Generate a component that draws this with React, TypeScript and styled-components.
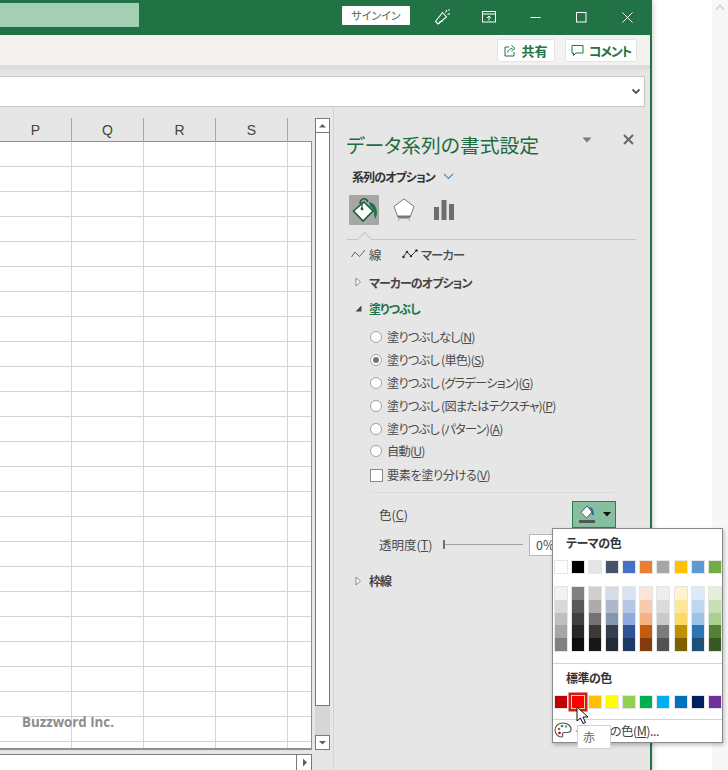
import React from 'react';
import styled, { createGlobalStyle } from 'styled-components';

const JP = `'Noto Sans CJK JP', 'Noto Sans', sans-serif`;
const GREEN = '#217346';

const GlobalStyle = createGlobalStyle`
  html, body {
    margin: 0;
    padding: 0;
    background: #fff;
    font-family: ${JP};
    font-feature-settings: 'palt';
  }
  * { box-sizing: border-box; }
`;

const Page = styled.div`
  display: flex;
  width: 728px;
  height: 770px;
  overflow: hidden;
  background: #fff;
`;

const Window = styled.div`
  position: relative;
  display: flex;
  flex-direction: column;
  width: 652px;
  height: 770px;
  flex: none;
  background: #e6e6e6;
  border-right: 2px solid ${GREEN};
  box-shadow: 2px 0 4px rgba(0, 0, 0, 0.15);
`;

const BlankGap = styled.div`
  flex: 1;
`;

const PageScroll = styled.div`
  display: flex;
  justify-content: center;
  width: 16px;
  padding-top: 4px;
  background: #f7f7f7;
`;

/* title bar */
const TitleBar = styled.div`
  display: flex;
  align-items: center;
  height: 35px;
  flex: none;
  background: ${GREEN};
`;

const SearchBox = styled.div`
  width: 139px;
  height: 24px;
  margin-right: 203px;
  margin-top: -5px;
  background: #a3d0b5;
`;

const SignIn = styled.div`
  width: 68px;
  height: 19px;
  margin-right: 10px;
  margin-top: -5px;
  background: #fff;
  color: #4a6b5b;
  border-radius: 1px;
  font-size: 11px;
  line-height: 19px;
  text-align: center;
`;

const WinButton = styled.div`
  display: flex;
  align-items: center;
  justify-content: center;
  width: 46px;
  height: 35px;
  padding-bottom: 1px;
  color: #fff;
`;

/* ribbon strip */
const Ribbon = styled.div`
  display: flex;
  justify-content: flex-end;
  align-items: center;
  gap: 10px;
  height: 30px;
  flex: none;
  padding-right: 13px;
  background: #f3f2f1;
`;

const RibbonButton = styled.div<{ $w: number; $tight?: boolean }>`
  display: flex;
  align-items: center;
  justify-content: center;
  gap: 5px;
  width: ${p => p.$w}px;
  height: 23px;
  background: #fff;
  border: 1px solid #e6e4e2;
  border-radius: 2px;
  color: ${GREEN};
  font-size: 13px;
  font-weight: 700;
  letter-spacing: ${p => (p.$tight ? '-1.2px' : '0')};
`;

const FormulaArea = styled.div`
  flex: none;
  height: 42px;
  padding: 11px 5px 0 0;
  background: linear-gradient(#d9d9d9, #e6e6e6 9px);
`;

const FormulaBox = styled.div`
  display: flex;
  align-items: center;
  justify-content: flex-end;
  height: 31px;
  padding-right: 3px;
  background: #fff;
  border: 1px solid #c6c6c6;
  border-left: none;
`;

/* main row */
const Main = styled.div`
  display: flex;
  flex: 1;
  min-height: 0;
`;

const SheetArea = styled.div`
  position: relative;
  display: flex;
  flex-direction: column;
  width: 334px;
  flex: none;
  padding-top: 11px;
  border-right: 1px solid #d4d4d4;
`;

const SheetTop = styled.div`
  display: flex;
`;

const Sheet = styled.div`
  width: 312px;
  flex: none;
`;

const ColumnHeads = styled.div`
  display: grid;
  grid-template-columns: 72px 72px 72px 72px 24px;
  height: 23px;
`;

const ColumnHead = styled.div`
  border-right: 1px solid #a8a8a8;
  color: #444;
  font-family: 'Liberation Sans', sans-serif;
  font-size: 14px;
  line-height: 25px;
  text-align: center;
  &:last-child { border-right: none; }
`;

const Cells = styled.div`
  display: grid;
  grid-template-columns: 72px 72px 72px 72px 23px;
  grid-auto-rows: 25px;
  height: 609px;
  overflow: hidden;
  background: #fff;
  border-top: 1px solid #8f8f8f;
  border-right: 1px solid #8f8f8f;
  border-bottom: 2px solid #8f8f8f;
`;

const Cell = styled.div`
  border-right: 1px solid #d4d4d4;
  border-bottom: 1px solid #d4d4d4;
  &:nth-child(5n) { border-right: none; }
`;

const Watermark = styled.div`
  position: absolute;
  left: 22px;
  top: 606px;
  color: #8c8c8c;
  font-family: 'Open Sans', sans-serif;
  font-size: 13.3px;
  font-weight: 700;
`;

const VScroll = styled.div`
  display: flex;
  flex-direction: column;
  width: 15px;
  height: 632px;
  margin-left: 3px;
  background: #d6d6d6;
`;

const ScrollButton = styled.div`
  display: flex;
  align-items: center;
  justify-content: center;
  flex: none;
  width: 15px;
  height: 15px;
  background: #fff;
  border: 1px solid #7a7a7a;
`;

const VThumb = styled.div`
  flex: none;
  height: 573px;
  background: #fff;
  border: 1px solid #7a7a7a;
  border-top: none;
`;

const Spring = styled.div`
  flex: 1;
`;

const HScroll = styled.div`
  display: flex;
  width: 312px;
  height: 16px;
  margin-top: 4px;
`;

const HThumb = styled.div`
  flex: 1;
  background: #fff;
  border-top: 1px solid #7a7a7a;
  border-right: 1px solid #7a7a7a;
`;

const HButton = styled.div`
  display: flex;
  align-items: center;
  justify-content: center;
  width: 15px;
  background: #fff;
  border-top: 1px solid #7a7a7a;
  border-right: 1px solid #7a7a7a;
`;

/* task pane */
const Pane = styled.div`
  flex: 1;
  padding: 24px 16px 0 13px;
  color: #4a4a4a;
  font-size: 12px;
`;

const PaneHead = styled.div`
  display: flex;
  align-items: center;
  height: 28px;
`;

const PaneTitle = styled.div`
  flex: 1;
  margin-left: -1px;
  color: #1f6b41;
  font-size: 19.8px;
  line-height: 28px;
  white-space: nowrap;
`;

const PaneControl = styled.div`
  display: flex;
  justify-content: center;
  align-items: center;
  width: 16px;
  height: 16px;
  margin-top: -11px;
  margin-left: 25px;
`;

const OptionsLine = styled.div`
  display: flex;
  align-items: center;
  gap: 8px;
  height: 18px;
  margin: 8px 0 0 5px;
  color: #333;
  font-size: 12px;
  font-weight: 700;
  letter-spacing: -0.9px;
`;

const IconTabs = styled.div`
  display: flex;
  gap: 10px;
  margin: 10px 0 0 2px;
`;

const IconTab = styled.div<{ $active?: boolean }>`
  display: flex;
  align-items: center;
  justify-content: center;
  width: 30px;
  height: 30px;
  background: ${p => (p.$active ? '#a6a6a6' : 'transparent')};
`;

const TabRule = styled.div`
  position: relative;
  height: 1px;
  width: 289px;
  margin-top: 14px;
  background: #c6c6c6;
  &::after {
    content: '';
    position: absolute;
    left: 12px;
    top: -5px;
    width: 10px;
    height: 10px;
    background: #e6e6e6;
    border-left: 1px solid #c6c6c6;
    border-top: 1px solid #c6c6c6;
    transform: rotate(45deg);
  }
`;

const SubTabs = styled.div`
  display: flex;
  align-items: center;
  height: 18px;
  margin: 5px 0 0 4px;
  font-size: 12.5px;
`;

const SubTab = styled.div<{ $w: number; $bold?: boolean }>`
  display: flex;
  align-items: center;
  gap: 3px;
  width: ${p => p.$w}px;
  font-weight: ${p => (p.$bold ? 500 : 400)};
  letter-spacing: ${p => (p.$bold ? '-1.1px' : '0')};
`;

const Section = styled.div<{ $gap: number; $green?: boolean }>`
  display: flex;
  align-items: center;
  gap: 7px;
  height: 18px;
  margin: ${p => p.$gap}px 0 0 8px;
  color: ${p => (p.$green ? GREEN : '#444')};
  font-size: 12px;
  font-weight: 700;
  letter-spacing: -0.9px;
`;

const Choices = styled.div`
  margin: 9px 0 0 23px;
`;

const Choice = styled.div`
  display: flex;
  align-items: center;
  gap: 5px;
  height: 22.8px;
  font-size: 12.2px;
  letter-spacing: -0.75px;
`;

const CheckChoice = styled(Choice)`
  margin-top: 1px;
  letter-spacing: -0.45px;
`;

const Radio = styled.span<{ $on?: boolean }>`
  display: flex;
  align-items: center;
  justify-content: center;
  width: 12px;
  height: 12px;
  border-radius: 50%;
  background: #fff;
  border: 1px solid #a2a2a2;
  &::after {
    content: '';
    display: ${p => (p.$on ? 'block' : 'none')};
    width: 6px;
    height: 6px;
    border-radius: 50%;
    background: #777;
  }
`;

const CheckBox = styled.span`
  width: 13px;
  height: 13px;
  margin-right: -1px;
  background: #fff;
  border: 1px solid #8a8a8a;
`;

const Key = styled.span`
  text-decoration: underline;
  text-underline-offset: 1px;
`;

const Divider = styled.div`
  width: 245px;
  height: 1px;
  margin: 5px 0 0 23px;
  background: #dcdcdc;
`;

const FormRow = styled.div<{ $gap: number; $h: number }>`
  display: flex;
  align-items: center;
  height: ${p => p.$h}px;
  margin: ${p => p.$gap}px 0 0 32px;
  font-size: 12.5px;
`;

const FormLabel = styled.div<{ $w: number }>`
  width: ${p => p.$w}px;
  flex: none;
`;

const ColorButton = styled.div`
  display: flex;
  align-items: center;
  justify-content: center;
  gap: 5px;
  width: 44px;
  height: 27px;
  background: #86bfa0;
  border: 1px solid #2f7d53;
`;

const Slider = styled.div`
  position: relative;
  width: 80px;
  height: 1px;
  margin-right: 6px;
  background: #a0a0a0;
  &::before {
    content: '';
    position: absolute;
    left: 0;
    top: -4px;
    width: 2px;
    height: 9px;
    background: #707070;
  }
`;

const PercentBox = styled.div`
  width: 50px;
  height: 22px;
  padding-left: 6px;
  background: #fff;
  border: 1px solid #b8b8b8;
  line-height: 20px;
`;

/* colour popup */
const ColorMenu = styled.div`
  position: absolute;
  left: 552px;
  top: 528px;
  width: 171px;
  height: 215px;
  background: #fff;
  border: 1px solid #8a8a8a;
  box-shadow: 1px 2px 4px rgba(0, 0, 0, 0.25);
  color: #333;
  z-index: 2;
`;

const MenuHeading = styled.div`
  height: 18px;
  margin: 5px 0 0 13px;
  font-size: 12px;
  font-weight: 700;
  line-height: 18px;
  letter-spacing: -0.5px;
`;

const SwatchRow = styled.div<{ $top: number }>`
  display: grid;
  grid-template-columns: repeat(10, 12px);
  column-gap: 5.04px;
  margin: ${p => p.$top}px 0 0 2.3px;
`;

const Swatch = styled.div<{ $c: string; $picked?: boolean }>`
  height: 12px;
  background: ${p => p.$c};
  box-shadow: ${p =>
    p.$picked
      ? '0 0 0 1px #f9d08e, 0 0 0 3.5px #c8201c'
      : '0 0 0 1px #e4e6e6'};
  position: ${p => (p.$picked ? 'relative' : 'static')};
`;

const ShadeColumn = styled.div`
  box-shadow: 0 0 0 1px #e4e6e6;
`;

const Shade = styled.div<{ $c: string }>`
  height: 12.8px;
  background: ${p => p.$c};
`;

const MenuRule = styled.div<{ $top: number }>`
  height: 1px;
  margin-top: ${p => p.$top}px;
  background: #d4d4d4;
`;

const MoreColors = styled.div`
  display: flex;
  align-items: center;
  gap: 3px;
  height: 21px;
  padding-left: 1px;
  font-size: 12.5px;
  letter-spacing: -0.5px;
  color: #444;
`;

const Tip = styled.div`
  position: absolute;
  left: 577px;
  top: 725px;
  width: 34px;
  height: 24px;
  padding-left: 5px;
  background: #fff;
  border: 1px solid #d2d2d2;
  color: #666;
  font-size: 12px;
  line-height: 22px;
  z-index: 3;
`;

const Pointer = styled.svg`
  position: absolute;
  left: 576px;
  top: 706px;
  z-index: 4;
`;

const themeColors = ['#ffffff', '#000000', '#e7e6e6', '#44546a', '#4472c4', '#ed7d31', '#a5a5a5', '#ffc000', '#5b9bd5', '#70ad47'];
const shades = [
  ['#f2f2f2', '#d9d9d9', '#bfbfbf', '#a6a6a6', '#808080'],
  ['#808080', '#595959', '#404040', '#262626', '#0d0d0d'],
  ['#d0cece', '#afabab', '#767171', '#3b3838', '#181717'],
  ['#d6dce5', '#adb9ca', '#8497b0', '#333f50', '#222a35'],
  ['#dae3f3', '#b4c7e7', '#8faadc', '#2f5597', '#1f3864'],
  ['#fbe5d6', '#f8cbad', '#f4b183', '#c55a11', '#843c0c'],
  ['#ededed', '#dbdbdb', '#c9c9c9', '#7b7b7b', '#525252'],
  ['#fff2cc', '#ffe699', '#ffd966', '#bf9000', '#7f6000'],
  ['#deebf7', '#bdd7ee', '#9dc3e6', '#2e75b6', '#1f4e79'],
  ['#e2f0d9', '#c5e0b4', '#a9d18e', '#548235', '#385723'],
];
const standardColors = ['#c00000', '#ff0000', '#ffc000', '#ffff00', '#92d050', '#00b050', '#00b0f0', '#0070c0', '#002060', '#7030a0'];

const fillChoices: [string, string, boolean][] = [
  ['塗りつぶしなし', 'N', false],
  ['塗りつぶし (単色)', 'S', true],
  ['塗りつぶし (グラデーション)', 'G', false],
  ['塗りつぶし (図またはテクスチャ)', 'P', false],
  ['塗りつぶし (パターン)', 'A', false],
  ['自動', 'U', false],
];

const Tri = ({ open }: { open?: boolean }) =>
  open ? (
    <svg width="7" height="7" viewBox="0 0 7 7"><path d="M0.5 6.5H6.5V0.5Z" fill="#444" /></svg>
  ) : (
    <svg width="7" height="10" viewBox="0 0 7 10"><path d="M1 1L5.5 5L1 9Z" fill="#fff" stroke="#8a8a8a" /></svg>
  );

const Small = ({ dir }: { dir: 'up' | 'down' | 'right' }) => (
  <svg width="9" height="9" viewBox="0 0 9 9">
    {dir === 'up' && <path d="M1 6.5H8L4.5 3Z" fill="#606060" />}
    {dir === 'down' && <path d="M1 3H8L4.5 6.5Z" fill="#606060" />}
    {dir === 'right' && <path d="M3 0.5V8.5L7 4.5Z" fill="#606060" />}
  </svg>
);

const App: React.FC = () => {
  return (
    <>
      <GlobalStyle />
      <Page>
        <Window>
          <TitleBar>
            <SearchBox />
            <SignIn>サインイン</SignIn>
            <WinButton>
              <svg width="18" height="18" viewBox="0 0 18 18" fill="none" stroke="#fff" strokeWidth="1.1">
                <path d="M1.5 13.5L8.5 4.5L12.5 9L4 16Z" />
                <path d="M5 16c0-2 1.5-3 3.5-2.5" />
                <path d="M11.5 4.5L13 2M13.5 6.5L16 5.5M14.5 2.5l1-1" />
              </svg>
            </WinButton>
            <WinButton>
              <svg width="14" height="12" viewBox="0 0 14 12" fill="none" stroke="#fff" strokeWidth="1">
                <rect x="0.5" y="0.5" width="13" height="10.5" />
                <path d="M0.5 3H13.5" />
                <path d="M7 9.5V5M5 7l2-2l2 2" />
              </svg>
            </WinButton>
            <WinButton>
              <svg width="11" height="11" viewBox="0 0 11 11"><path d="M0.5 5.5H10.5" stroke="#fff" strokeWidth="1" /></svg>
            </WinButton>
            <WinButton>
              <svg width="11" height="11" viewBox="0 0 11 11"><rect x="0.5" y="0.5" width="9.5" height="9.5" fill="none" stroke="#fff" strokeWidth="1" /></svg>
            </WinButton>
            <WinButton>
              <svg width="11" height="11" viewBox="0 0 11 11"><path d="M0.5 0.5L10.5 10.5M10.5 0.5L0.5 10.5" stroke="#fff" strokeWidth="1" /></svg>
            </WinButton>
          </TitleBar>

          <Ribbon>
            <RibbonButton $w={58}>
              <svg width="12" height="13" viewBox="0 0 12 13" fill="none" stroke="#217346" strokeWidth="1">
                <path d="M5 3H1V12H10V8" />
                <path d="M3.5 8.5C4 6 6 4.5 8.5 4.5M7.5 1.5L11 4.5L7.5 7" />
              </svg>
              共有
            </RibbonButton>
            <RibbonButton $w={72} $tight>
              <svg width="13" height="13" viewBox="0 0 13 13" fill="none" stroke="#217346" strokeWidth="1">
                <path d="M1 1.5H12V9H5L2.5 11.5V9H1Z" />
              </svg>
              コメント
            </RibbonButton>
          </Ribbon>

          <FormulaArea>
            <FormulaBox>
              <svg width="10" height="8" viewBox="0 0 10 8" fill="none"><path d="M1.5 1.5L5 5L8.5 1.5" stroke="#555" strokeWidth="1.8" /></svg>
            </FormulaBox>
          </FormulaArea>

          <Main>
            <SheetArea>
              <SheetTop>
                <Sheet>
                  <ColumnHeads>
                    {['P', 'Q', 'R', 'S', ''].map((c, i) => (
                      <ColumnHead key={i}>{c}</ColumnHead>
                    ))}
                  </ColumnHeads>
                  <Cells>
                    {Array.from({ length: 125 }).map((_, i) => (
                      <Cell key={i} />
                    ))}
                  </Cells>
                </Sheet>
                <VScroll>
                  <ScrollButton><Small dir="up" /></ScrollButton>
                  <VThumb />
                  <Spring />
                  <ScrollButton><Small dir="down" /></ScrollButton>
                </VScroll>
              </SheetTop>
              <HScroll>
                <HThumb />
                <HButton><Small dir="right" /></HButton>
              </HScroll>
              <Watermark>Buzzword Inc.</Watermark>
            </SheetArea>

            <Pane>
              <PaneHead>
                <PaneTitle>データ系列の書式設定</PaneTitle>
                <PaneControl>
                  <svg width="10" height="6" viewBox="0 0 10 6"><path d="M0.5 0.5H9.5L5 5.5Z" fill="#7a7a7a" /></svg>
                </PaneControl>
                <PaneControl>
                  <svg width="11" height="11" viewBox="0 0 11 11"><path d="M1 1L10 10M10 1L1 10" stroke="#666" strokeWidth="2" /></svg>
                </PaneControl>
              </PaneHead>

              <OptionsLine>
                系列のオプション
                <svg width="11" height="7" viewBox="0 0 11 7" fill="none"><path d="M1 1L5.5 5.5L10 1" stroke="#4a90c8" strokeWidth="1.2" /></svg>
              </OptionsLine>

              <IconTabs>
                <IconTab $active>
                  <svg width="30" height="30" viewBox="0 0 30 30">
                    <path d="M15 7L4.500 16L14 26L24 16Z" fill="#fff" stroke="#1e5f3c" strokeWidth="1.600" />
                    <path d="M11 9C11 3 17 2 19 7" fill="none" stroke="#1e5f3c" strokeWidth="1.500" />
                    <path d="M13 7V13" stroke="#1e5f3c" strokeWidth="1.200" />
                    <circle cx="13" cy="14" r="1.400" fill="#1e5f3c" />
                    <path d="M20 7C25 8 28 11 28 19L26.500 24L25 20C25 16 24 14 21 11Z" fill="#217346" />
                  </svg>
                </IconTab>
                <IconTab>
                  <svg width="24" height="26" viewBox="0 0 24 26">
                    <path d="M12 2L22 9.500L18 20.500H6L2 9.500Z" fill="#fff" stroke="#7a7a7a" strokeWidth="1" />
                    <path d="M6 19.500H18" stroke="#7a7a7a" strokeWidth="2" />
                    <path d="M6.500 24L7 21.500H17L17.500 24" fill="none" stroke="#b0b0b0" strokeWidth="1" />
                  </svg>
                </IconTab>
                <IconTab>
                  <svg width="22" height="22" viewBox="0 0 22 22">
                    <path d="M1 8H6V21H1ZM8.500 1H13.500V21H8.500ZM16 5H21V21H16Z" fill="#6d6d6d" />
                  </svg>
                </IconTab>
              </IconTabs>
              <TabRule />

              <SubTabs>
                <SubTab $w={51}>
                  <svg width="15" height="10" viewBox="0 0 15 10" fill="none"><path d="M0.500 8L4 3L8.500 7.500L14 1" stroke="#555" strokeWidth="0.9" /></svg>
                  線
                </SubTab>
                <SubTab $w={70} $bold>
                  <svg width="16" height="10" viewBox="0 0 16 10" fill="none">
                    <path d="M1 8L5 3L9 7L15 1" stroke="#333" strokeWidth="1" />
                    <circle cx="1.500" cy="8" r="1.300" fill="#333" />
                    <circle cx="5" cy="3" r="1.300" fill="#333" />
                    <circle cx="9" cy="7" r="1.300" fill="#333" />
                    <circle cx="14.500" cy="1.500" r="1.300" fill="#333" />
                  </svg>
                  マーカー
                </SubTab>
              </SubTabs>

              <Section $gap={10}>
                <Tri />
                マーカーのオプション
              </Section>
              <Section $gap={8} $green>
                <Tri open />
                塗りつぶし
              </Section>

              <Choices>
                {fillChoices.map(([label, key, on]) => (
                  <Choice key={key}>
                    <Radio $on={on} />
                    <span>{label}(<Key>{key}</Key>)</span>
                  </Choice>
                ))}
                <CheckChoice>
                  <CheckBox />
                  <span>要素を塗り分ける(<Key>V</Key>)</span>
                </CheckChoice>
              </Choices>
              <Divider />

              <FormRow $gap={8} $h={27}>
                <FormLabel $w={193}>色(<Key>C</Key>)</FormLabel>
                <ColorButton>
                  <svg width="20" height="19" viewBox="0 0 20 19">
                    <path d="M9 1L3 7.500L8.500 13L14 7Z" fill="#fff" stroke="#333" strokeWidth="0.8" />
                    <path d="M12 2C15 3 16 6 16 10L14 10C14 7 13.500 5 11 3Z" fill="#2e6da4" />
                    <rect x="1" y="15" width="16" height="3" fill="#555" />
                  </svg>
                  <svg width="8" height="5" viewBox="0 0 8 5"><path d="M0 0H8L4 4.500Z" fill="#111" /></svg>
                </ColorButton>
              </FormRow>
              <FormRow $gap={6} $h={22}>
                <FormLabel $w={64}>透明度(<Key>T</Key>)</FormLabel>
                <Slider />
                <PercentBox>0%</PercentBox>
              </FormRow>
              <Section $gap={16}>
                <Tri />
                枠線
              </Section>
            </Pane>
          </Main>

          <ColorMenu>
            <MenuHeading>テーマの色</MenuHeading>
            <SwatchRow $top={9}>
              {themeColors.map(c => (
                <Swatch key={c} $c={c} />
              ))}
            </SwatchRow>
            <SwatchRow $top={14}>
              {shades.map((col, i) => (
                <ShadeColumn key={i}>
                  {col.map((c, j) => (
                    <Shade key={j} $c={c} />
                  ))}
                </ShadeColumn>
              ))}
            </SwatchRow>
            <MenuRule $top={12} />
            <MenuHeading>標準の色</MenuHeading>
            <SwatchRow $top={9}>
              {standardColors.map((c, i) => (
                <Swatch key={c} $c={c} $picked={i === 1} />
              ))}
            </SwatchRow>
            <MenuRule $top={11} />
            <MoreColors>
              <svg width="18" height="18" viewBox="0 0 18 18">
                <path d="M9 2C4.500 2 1 5 1 9c0 3.500 3 7 6.500 7c1.500 0 1.500-1.500 1-2.500c-.5-1.200 .5-2 1.500-2h3c2.500 0 4-1.500 4-3C17 4.500 13.500 2 9 2Z" fill="#fff" stroke="#555" strokeWidth="1.100" />
                <circle cx="5" cy="8" r="1.300" fill="#c55a11" />
                <circle cx="8" cy="5" r="1.300" fill="#4472c4" />
                <circle cx="12" cy="5.500" r="1.300" fill="#70ad47" />
                <circle cx="5.500" cy="12" r="1.300" fill="#c00000" />
              </svg>
              <span>その他の色(<Key>M</Key>)...</span>
            </MoreColors>
          </ColorMenu>
          <Tip>赤</Tip>
          <Pointer width="14" height="19" viewBox="0 0 14 19">
            <path d="M1 1V15L4.500 12L7 17.500L9.500 16.500L7 11H12Z" fill="#fff" stroke="#111" strokeWidth="1" />
          </Pointer>
        </Window>
        <BlankGap />
        <PageScroll>
          <svg width="10" height="7" viewBox="0 0 10 7" fill="none"><path d="M1 5.500L5 1.500L9 5.500" stroke="#d8d8d8" strokeWidth="2" /></svg>
        </PageScroll>
      </Page>
    </>
  );
};

export default App;
